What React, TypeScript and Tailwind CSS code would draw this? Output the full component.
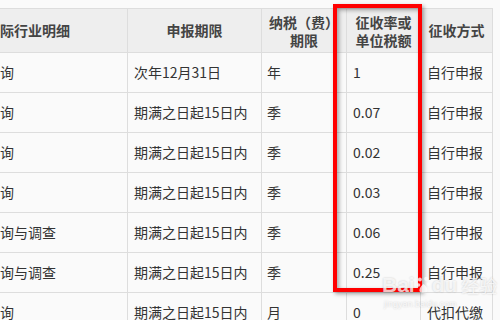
const font = { fontFamily: '"Noto Sans CJK SC", "Noto Sans", sans-serif' };

const rows = [
  ["询", "次年12月31日", "年", "1", "自行申报"],
  ["询", "期满之日起15日内", "季", "0.07", "自行申报"],
  ["询", "期满之日起15日内", "季", "0.02", "自行申报"],
  ["询", "期满之日起15日内", "季", "0.03", "自行申报"],
  ["询与调查", "期满之日起15日内", "季", "0.06", "自行申报"],
  ["询与调查", "期满之日起15日内", "季", "0.25", "自行申报"],
  ["询", "期满之日起15日内", "月", "0", "代扣代缴"],
];

const cols = "grid grid-cols-[128px_134px_85px_74px_72px] w-[493px]";

export default function App() {
  return (
    <div
      className="relative w-[500px] h-[320px] overflow-hidden bg-[#fafafa] text-[14px] text-[#333]"
      style={font}
    >
      <div className="mt-2 w-[493px] border-t border-[#dddddd]">
        {/* header */}
        <div className={`${cols} h-[44px] bg-[#eeeeee] font-bold text-[#444] border-b border-[#dddddd]`}>
          <div className="flex items-center border-r border-[#dddddd] whitespace-nowrap overflow-hidden">
            际行业明细
          </div>
          <div className="flex items-center justify-center border-r border-[#dddddd]">申报期限</div>
          <div className="flex flex-col items-center justify-center border-r border-[#dddddd] leading-[18px]">
            <span>纳税（费）</span>
            <span>期限</span>
          </div>
          <div className="flex flex-col items-center justify-center border-r border-[#dddddd] leading-[18px]">
            <span>征收率或</span>
            <span>单位税额</span>
          </div>
          <div className="flex items-center justify-center border-r border-[#dddddd]">征收方式</div>
        </div>

        {/* body */}
        {rows.map((r, i) => (
          <div key={i} className={`${cols} h-[40px] border-b border-[#dddddd]`}>
            <div className="flex items-center border-r border-[#dddddd] whitespace-nowrap overflow-hidden">{r[0]}</div>
            <div className="flex items-center pl-[6px] border-r border-[#dddddd] whitespace-nowrap overflow-hidden">{r[1]}</div>
            <div className="flex items-center pl-[5px] border-r border-[#dddddd]">{r[2]}</div>
            <div className="flex items-center pl-[6px] border-r border-[#dddddd]">{r[3]}</div>
            <div className="flex items-center pl-[6px] border-r border-[#dddddd] whitespace-nowrap">{r[4]}</div>
          </div>
        ))}
      </div>

      {/* red highlight box */}
      <div className="absolute left-[333px] top-[4px] w-[89px] h-[288px] border-4 border-[#ff0000] shadow-[2px_2px_4px_rgba(0,0,0,0.35),inset_2px_2px_4px_rgba(0,0,0,0.35)]" />

      {/* watermark */}
      <div className="pointer-events-none absolute left-[382px] top-[274px] flex flex-col items-start text-white/75 [text-shadow:0_0_2px_rgba(0,0,0,0.2)]">
        <div className="flex items-center text-[21px] font-bold leading-[22px]" style={{ fontFamily: '"Liberation Sans", sans-serif' }}>
          <span>Bai</span>
          <svg width="15" height="20" viewBox="0 0 16 22" className="mx-[1px]">
            <circle cx="4" cy="5" r="2.2" fill="rgba(255,255,255,0.75)" />
            <circle cx="11" cy="4" r="2.2" fill="rgba(255,255,255,0.75)" />
            <circle cx="2.5" cy="11" r="2" fill="rgba(255,255,255,0.75)" />
            <circle cx="13.5" cy="10" r="2" fill="rgba(255,255,255,0.75)" />
            <path d="M8 10 C4 13 2 18 5 19 C7 20 9 19 11 19 C14 18 12 13 8 10Z" fill="rgba(255,255,255,0.75)" />
          </svg>
          <span>du</span>
          <span className="ml-1 text-[18px] font-normal" style={font}>经验</span>
        </div>
        <div className="text-[9px] leading-[11px] mt-[3px] ml-[2px]" style={{ fontFamily: '"Liberation Sans", sans-serif' }}>
          jingyan.baidu.com
        </div>
      </div>
    </div>
  );
}
